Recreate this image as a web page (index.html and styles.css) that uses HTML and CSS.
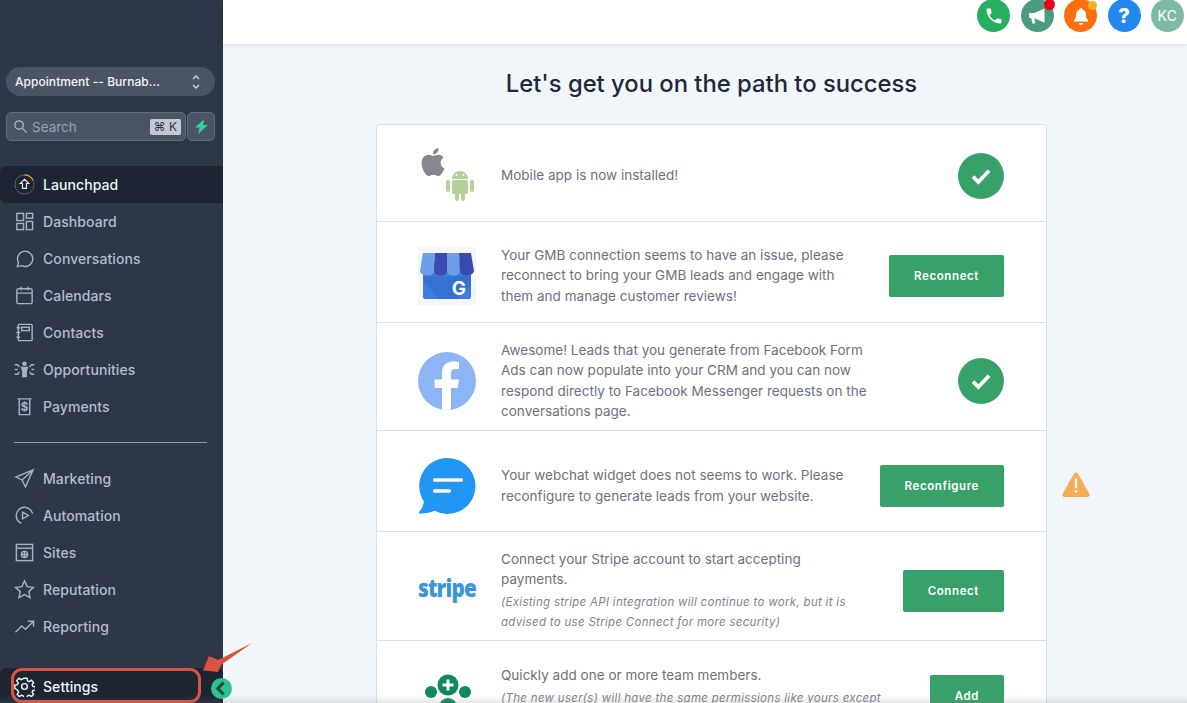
FILE: index.html
```html
<!DOCTYPE html>
<html lang="en">
<head>
    <meta charset="UTF-8">
    <title>Launchpad</title>
    <link rel="stylesheet" href="styles.css">
</head>
<body>
    <aside class="sidebar">
        <div class="location">
            <span class="location-name">Appointment -- Burnab...</span>
            <svg class="updown" viewBox="0 0 10 18"><path d="M2 6l3-3 3 3M2 12l3 3 3-3"/></svg>
        </div>
        <div class="search-row">
            <div class="search">
                <svg class="search-icon" viewBox="0 0 16 16"><circle cx="6.500" cy="6.500" r="4.500"/><path d="M10 10l4.500 4.500"/></svg>
                <span class="search-text">Search</span>
                <span class="kbd">⌘ K</span>
            </div>
            <div class="bolt"><svg viewBox="0 0 14 14"><path d="M9.500 0L1 8h4.200L4 14l9-8.500H8.500z"/></svg></div>
        </div>

        <nav class="nav">
            <a class="nav-item active">
                <svg class="nav-icon" viewBox="0 0 22 22"><circle cx="11" cy="11" r="10" stroke="#5f6777" stroke-width="1"/><path d="M11 1a10 10 0 0 1 9 5.600" stroke="#ed8936"/><path d="M11 5.500l4.500 4.500h-2.400v5H8.900v-5H6.500z" stroke="#e2e8f0" stroke-width="1.200"/></svg>
                Launchpad
            </a>
            <a class="nav-item">
                <svg class="nav-icon" viewBox="0 0 22 22"><rect x="3" y="2.500" width="7" height="7.500"/><rect x="13" y="2.500" width="6.500" height="5"/><rect x="3" y="13" width="7" height="6.500"/><rect x="13" y="11" width="6.500" height="8.500" /></svg>
                Dashboard
            </a>
            <a class="nav-item">
                <svg class="nav-icon" viewBox="0 0 22 22"><path d="M3.500 19.500l1.200-4.200A8 8 0 1 1 8 18.500z"/></svg>
                Conversations
            </a>
            <a class="nav-item">
                <svg class="nav-icon" viewBox="0 0 22 22"><rect x="3" y="4" width="16" height="15.500" rx="1.500"/><path d="M3 8.500h16M7.500 1.800V5.500M14.500 1.800V5.500"/></svg>
                Calendars
            </a>
            <a class="nav-item">
                <svg class="nav-icon" viewBox="0 0 22 22"><rect x="4.500" y="2.500" width="14.500" height="17" rx="1"/><rect x="8" y="5.500" width="8" height="3.500"/><path d="M2.500 6h4M2.500 11h4M2.500 16h4"/></svg>
                Contacts
            </a>
            <a class="nav-item">
                <svg class="nav-icon" viewBox="0 0 22 22"><circle cx="11" cy="5" r="2.400" class="solid"/><path d="M7 8.200h8l-1.500 5v5.800h-5v-5.800z" class="solid"/><path d="M.8 6h3l2 2.500M21.200 6h-3l-2 2.500M.8 16h3l2-2.500M21.200 16h-3l-2-2.500M.8 11h3M18.200 11h3"/></svg>
                Opportunities
            </a>
            <a class="nav-item">
                <svg class="nav-icon" viewBox="0 0 22 22"><path d="M3.500 3h15M5.500 3v16.500h11V3"/><text x="11" y="15.500" class="dollar">$</text></svg>
                Payments
            </a>
        </nav>

        <hr class="nav-divider">

        <nav class="nav">
            <a class="nav-item">
                <svg class="nav-icon" viewBox="0 0 22 22"><path d="M20 2L2 9.500l6.500 3 3.500 7.500zM20 2L8.500 12.500"/></svg>
                Marketing
            </a>
            <a class="nav-item">
                <svg class="nav-icon" viewBox="0 0 22 22"><path d="M19.500 9A8.700 8.700 0 1 0 8 19.300"/><path d="M9 7.500l6 3.500-6 3.500z"/></svg>
                Automation
            </a>
            <a class="nav-item">
                <svg class="nav-icon" viewBox="0 0 22 22"><rect x="2.500" y="2.500" width="17" height="17"/><path d="M2.500 6.500h17"/><circle cx="11" cy="13" r="3.200"/><path d="M7.800 13h6.400M11 9.800v6.400"/></svg>
                Sites
            </a>
            <a class="nav-item">
                <svg class="nav-icon" viewBox="0 0 22 22"><path d="M11 2l2.800 6 6.500.8-4.800 4.400 1.300 6.400L11 16.400l-5.800 3.200 1.300-6.400-4.800-4.400 6.500-.8z"/></svg>
                Reputation
            </a>
            <a class="nav-item">
                <svg class="nav-icon" viewBox="0 0 22 22"><path d="M1.500 17l6.500-6.500 4 3.500 8-8M14.500 5.500h6v5.500"/></svg>
                Reporting
            </a>
        </nav>

        <a class="nav-item settings">
            <svg class="nav-icon" viewBox="0 0 22 22"><circle cx="11" cy="11" r="3"/><path d="M9.300 2h3.400l.5 2.700 1.800.8 2.300-1.500 2.300 2.400-1.500 2.200.8 1.900 2.700.5v3.300l-2.700.5-.8 1.800 1.500 2.300-2.300 2.300-2.300-1.500-1.800.8-.5 2.600H9.300l-.5-2.600-1.800-.8-2.300 1.500-2.300-2.300 1.500-2.300-.8-1.800L0 12.400V9.100l2.700-.5.800-1.900L2 4.400 4.300 2l2.300 1.500 1.800-.8z" transform="translate(.9 .4)"/></svg>
            Settings
        </a>
        <span class="settings-outline"></span>
        <span class="collapse"><svg viewBox="0 0 20 20"><path d="M12 4.500L6.500 10l5.500 5.500"/></svg></span>
    </aside>

    <svg class="arrow" viewBox="0 0 51 32"><path d="M50 1L16 18l-9-4L1 28.500 16 30l3-7z"/></svg>

    <div class="main">
        <header class="topbar">
            <span class="top-btn phone">
                <svg viewBox="0 0 24 24"><path d="M6.600 10.800c1.400 2.800 3.800 5.100 6.600 6.600l2.200-2.200c.3-.3.700-.4 1-.2 1.100.4 2.300.6 3.600.6.600 0 1 .4 1 1V20c0 .6-.4 1-1 1C10.600 21 3 13.400 3 4c0-.6.400-1 1-1h3.500c.6 0 1 .4 1 1 0 1.300.2 2.500.6 3.600.1.300 0 .7-.2 1z"/></svg>
            </span>
            <span class="top-btn megaphone">
                <svg viewBox="0 0 24 24"><path d="M21 3L9 8.500H2.500v6H5L6.500 21h3.500l-1.200-6.200L21 20zM22.500 9.500v4"/></svg>
                <i class="dot dot-red"></i>
            </span>
            <span class="top-btn bell">
                <svg viewBox="0 0 24 24"><path d="M12 2.500a2 2 0 0 1 2 2c3 1 4 3.500 4 6.500 0 3 1 4.500 2.500 6v1.500h-17V17C5 15.500 6 14 6 11c0-3 1-5.500 4-6.500a2 2 0 0 1 2-2zM9.500 20.500h5a2.500 2.500 0 0 1-5 0z"/></svg>
                <i class="dot dot-amber"></i>
            </span>
            <span class="top-btn help">?</span>
            <span class="top-btn avatar">KC</span>
        </header>

        <section class="content">
            <h1 class="title">Let's get you on the path to success</h1>
            <div class="card">
                <div class="row row-mobile">
                    <div class="logo mobile-logo">
                        <svg class="apple" viewBox="0 0 24 24"><path d="M12.152 6.896c-.948 0-2.415-1.078-3.960-1.040-2.040.027-3.910 1.183-4.961 3.014-2.117 3.675-.546 9.103 1.519 12.090 1.013 1.454 2.208 3.090 3.792 3.039 1.520-.065 2.090-.987 3.935-.987 1.831 0 2.350.987 3.960.948 1.637-.026 2.676-1.480 3.676-2.948 1.156-1.688 1.636-3.325 1.662-3.415-.039-.013-3.182-1.221-3.220-4.857-.026-3.040 2.480-4.494 2.597-4.559-1.429-2.090-3.623-2.324-4.390-2.376-2-.156-3.675 1.090-4.610 1.090zM15.530 3.830c.843-1.012 1.400-2.427 1.245-3.830-1.207.052-2.662.805-3.532 1.818-.780.896-1.454 2.338-1.273 3.714 1.338.104 2.715-.688 3.559-1.701"/></svg>
                        <svg class="android" viewBox="0 0 30 32"><path d="M7 10a8 8 0 0 1 16 0z"/><rect x="7" y="11" width="16" height="14" rx="1.500"/><rect x="1" y="11" width="4" height="12" rx="2"/><rect x="25" y="11" width="4" height="12" rx="2"/><rect x="10" y="23" width="4" height="9" rx="2"/><rect x="16" y="23" width="4" height="9" rx="2"/><circle cx="11.500" cy="6" r="1" fill="#fff"/><circle cx="18.500" cy="6" r="1" fill="#fff"/></svg>
                    </div>
                    <p class="row-text">Mobile app is now installed!</p>
                    <span class="done"><svg viewBox="0 0 24 24"><path d="M6 12.500l4 4 8-8.500"/></svg></span>
                </div>

                <div class="row row-gmb">
                    <div class="logo">
                        <svg viewBox="0 0 58 58">
                            <rect width="58" height="58" fill="#f5f6f6"/>
                            <rect x="5" y="14" width="48" height="38" rx="2" fill="#3b7de0"/>
                            <path d="M5 29h48v10L38 52H22L5 34z" fill="#2f68c4" opacity=".55"/>
                            <path d="M5 6h12l-1 18c0 6-13 6-14 0z" fill="#6c9fe8"/>
                            <path d="M17 6h12v18c0 6-13 6-13 0z" fill="#3c4ab0"/>
                            <path d="M29 6h12l1 18c0 6-13 6-13 0z" fill="#6c9fe8"/>
                            <path d="M41 6h12l3 18c-1 6-14 6-14 0z" fill="#3c4ab0"/>
                            <text x="41" y="48" class="gmb-g">G</text>
                        </svg>
                    </div>
                    <p class="row-text">Your GMB connection seems to have an issue, please reconnect to bring your GMB leads and engage with them and manage customer reviews!</p>
                    <button class="action">Reconnect</button>
                </div>

                <div class="row row-fb">
                    <div class="logo">
                        <svg viewBox="0 0 58 58"><circle cx="29" cy="29" r="29" fill="#8db4f5"/><path d="M24 57.500V36h-7.500v-8.500H24V21c0-7.500 4.500-11.500 11-11.500 3 0 6 .5 6 .5v7h-3.500c-3.500 0-4.500 2.200-4.500 4.500v6h8l-1.300 8.500H33v21.500a29 29 0 0 1-9 0z" fill="#fff"/></svg>
                    </div>
                    <p class="row-text">Awesome! Leads that you generate from Facebook Form Ads can now populate into your CRM and you can now respond directly to Facebook Messenger requests on the conversations page.</p>
                    <span class="done"><svg viewBox="0 0 24 24"><path d="M6 12.500l4 4 8-8.500"/></svg></span>
                </div>

                <div class="row row-chat">
                    <div class="logo">
                        <svg viewBox="0 0 58 58"><path d="M29.500 1a28 28 0 1 1-13 52.800C12 56 6 56.800 2 56.500c-1 0-1.300-1-.8-1.700 2.500-2.800 4-6 4.700-10.300A28 28 0 0 1 29.500 1z" fill="#2196f3"/><path d="M16.500 23h27M16.500 34h15" stroke="#fff" stroke-width="3.400" stroke-linecap="round"/></svg>
                    </div>
                    <p class="row-text">Your webchat widget does not seems to work. Please reconfigure to generate leads from your website.</p>
                    <button class="action">Reconfigure</button>
                    <svg class="warning" viewBox="0 0 30 27"><path d="M15 1.500c1 0 1.700.5 2.200 1.400l11 19.500c.9 1.800 0 3.600-2 3.600H3.800c-2 0-2.900-1.800-2-3.600l11-19.500c.5-.9 1.200-1.400 2.200-1.400z" fill="#f6ad55"/><path d="M15 8.500v7.500" stroke="#fff" stroke-width="2.400" stroke-linecap="round"/><circle cx="15" cy="20.500" r="1.400" fill="#fff"/></svg>
                </div>

                <div class="row row-stripe">
                    <div class="logo stripe-logo">stripe</div>
                    <div class="row-text">
                        <p>Connect your Stripe account to start accepting payments.</p>
                        <p class="note">(Existing stripe API integration will continue to work, but it is advised to use Stripe Connect for more security)</p>
                    </div>
                    <button class="action">Connect</button>
                </div>

                <div class="row row-team">
                    <div class="logo team-logo">
                        <svg viewBox="0 0 58 58"><circle cx="30" cy="14" r="10.500" fill="#0f8a5f"/><path d="M30 8.500v11M24.500 14h11" stroke="#fff" stroke-width="3"/><circle cx="13" cy="21" r="6" fill="#0f8a5f"/><circle cx="47" cy="21" r="6" fill="#0f8a5f"/><circle cx="30" cy="36" r="9" fill="#0f8a5f"/></svg>
                    </div>
                    <div class="row-text">
                        <p>Quickly add one or more team members.</p>
                        <p class="note">(The new user(s) will have the same permissions like yours except</p>
                    </div>
                    <button class="action">Add</button>
                </div>
            </div>
        </section>
    </div>
    <div class="bottom-fade"></div>
</body>
</html>
```

FILE: styles.css
```css
* {
    box-sizing: border-box;
}
html, body {
    height: 100%;
}
body {
    margin: 0;
    display: flex;
    overflow: hidden;
    font-family: Inter, "Liberation Sans", sans-serif;
    background-color: #f1f6fa;
    color: #6b7280;
}
p {
    margin: 0;
}

/* sidebar */
.sidebar {
    position: relative;
    flex: 0 0 223px;
    height: 100%;
    padding-top: 67px;
    background-color: #2d3748;
    display: flex;
    flex-direction: column;
}
.location {
    height: 29px;
    margin: 0 8px 0 6px;
    padding: 0 14px 0 9px;
    border-radius: 15px;
    background-color: #4a5464;
    color: #f2f4f7;
    font-size: 12px;
    font-weight: 500;
    letter-spacing: 0.05px;
    display: flex;
    align-items: center;
    justify-content: space-between;
}
.updown {
    width: 10px;
    height: 18px;
    fill: none;
    stroke: #cbd5e0;
    stroke-width: 1.4;
}
.search-row {
    display: flex;
    height: 29px;
    margin: 16px 8px 0 6px;
    gap: 1px;
}
.search {
    flex: 1;
    display: flex;
    align-items: center;
    padding: 0 4px 0 6px;
    border: 1px solid #626b7a;
    border-radius: 5px;
    background-color: #4a5464;
}
.search-icon {
    width: 15px;
    height: 15px;
    fill: none;
    stroke: #a9b2bf;
    stroke-width: 1.5;
}
.search-text {
    flex: 1;
    margin-left: 4px;
    color: #98a2b1;
    font-size: 13.500px;
}
.kbd {
    padding: 1px 4px;
    border-radius: 2px;
    background-color: #c3c9d2;
    color: #2d3748;
    font-size: 12px;
    line-height: 14px;
}
.bolt {
    width: 28px;
    border: 1px solid #626b7a;
    border-radius: 5px;
    background-color: #4a5464;
    display: flex;
    align-items: center;
    justify-content: center;
}
.bolt svg {
    width: 15px;
    height: 15px;
    fill: #34d399;
}
.nav {
    display: flex;
    flex-direction: column;
}
.search-row + .nav {
    margin-top: 25px;
}
.nav-item {
    height: 37px;
    padding-left: 14px;
    display: flex;
    align-items: center;
    gap: 8px;
    color: #b3bdcb;
    font-size: 14px;
    font-weight: 500;
    letter-spacing: 0.08px;
}
.nav-item.active {
    background-color: #1d2432;
    border-radius: 6px 0 0 6px;
    color: #f0f3f7;
}
.nav-icon {
    flex: 0 0 21px;
    width: 21px;
    height: 21px;
    fill: none;
    stroke: #a7b1c0;
    stroke-width: 1.500;
}
.nav-icon .solid {
    fill: #a7b1c0;
    stroke: none;
}
.nav-icon .dollar {
    fill: #a7b1c0;
    stroke: none;
    font-size: 12px;
    font-weight: 700;
    text-anchor: middle;
}
.nav-divider {
    width: 193px;
    margin: 17px 0 17px 14px;
    border: 0;
    border-top: 1px solid #929cab;
}
.settings {
    position: absolute;
    left: 0;
    right: 0;
    bottom: 0;
    height: 35px;
    padding-top: 2px;
    background-color: #1d2432;
    border-radius: 6px 6px 0 0;
    color: #f0f3f7;
}
.settings .nav-icon {
    stroke: #f0f3f7;
}
.settings-outline {
    position: absolute;
    left: 11px;
    bottom: 0;
    width: 190px;
    height: 35px;
    border: 3.500px solid #dc5440;
    border-radius: 11px;
}
.collapse {
    position: absolute;
    left: 211px;
    bottom: 4px;
    width: 21px;
    height: 21px;
    border-radius: 50%;
    background-color: #2cc48d;
}
.collapse svg {
    display: block;
    fill: none;
    stroke: #1f4a45;
    stroke-width: 3;
}
.arrow {
    position: absolute;
    left: 202px;
    top: 642px;
    width: 51px;
    height: 32px;
    fill: #dc5440;
    z-index: 3;
}

/* top bar */
.main {
    flex: 1;
    min-width: 0;
    display: flex;
    flex-direction: column;
}
.topbar {
    flex: 0 0 44px;
    padding-right: 3px;
    background-color: #fff;
    box-shadow: 0 1px 4px rgba(0, 0, 0, 0.12);
    display: flex;
    justify-content: flex-end;
    gap: 10.500px;
    z-index: 1;
}
.top-btn {
    position: relative;
    width: 33px;
    height: 33px;
    margin-top: -1px;
    border-radius: 50%;
    color: #fff;
    display: flex;
    align-items: center;
    justify-content: center;
}
.top-btn svg {
    width: 20px;
    height: 20px;
    fill: #fff;
}
.phone {
    background-color: #27ae60;
}
.megaphone {
    background-color: #4a9b80;
}
.bell {
    background-color: #fb6f0f;
}
.help {
    background-color: #2088f0;
    font-size: 20px;
    font-weight: 800;
}
.avatar {
    background-color: #7cbaa3;
    font-size: 14px;
    letter-spacing: 0.3px;
}
.dot {
    position: absolute;
    top: 0;
    right: -1px;
    width: 11px;
    height: 11px;
    border-radius: 50%;
}
.dot-red {
    background-color: #e8001c;
}
.dot-amber {
    width: 9px;
    height: 9px;
    top: 2px;
    right: 0;
    background-color: #f9b020;
}

/* main list */
.content {
    flex: 1;
    min-height: 0;
    padding-left: 13px;
    display: flex;
    flex-direction: column;
    align-items: center;
}
.title {
    margin: 24px 0 25px;
    color: #1f2937;
    font-size: 23.800px;
    line-height: 31px;
    font-weight: 500;
}
.card {
    flex: none;
    width: 671px;
    background-color: #fff;
    border: 1px solid #d9dfe6;
    border-radius: 4px 4px 0 0;
}
.row {
    position: relative;
    padding: 7px 42px 0 41px;
    border-bottom: 1px solid #d9dfe6;
    display: flex;
    align-items: center;
}
.row-mobile { height: 97px; padding-top: 5px; }
.row-gmb { height: 101px; }
.row-fb { height: 108px; padding-top: 8px; }
.row-chat { height: 101px; padding-top: 9px; }
.row-stripe { height: 109px; padding-top: 9px; }
.row-team { height: 110px; border-bottom: 0; align-items: flex-start; padding-top: 24px; }
.logo {
    flex: 0 0 58px;
    width: 58px;
    margin-right: 25px;
}
.logo svg {
    display: block;
}
.row-text {
    flex: 1;
    max-width: 367px;
    margin-right: auto;
    font-size: 13.500px;
    line-height: 20.500px;
    letter-spacing: 0.02px;
    color: #6b7280;
}
.row-team .row-text {
    max-width: 390px;
}
.note {
    margin-top: 2px;
    font-size: 11.500px;
    font-style: italic;
    letter-spacing: 0.3px;
    line-height: 20.500px;
    color: #7c8592;
}
.action {
    flex: none;
    height: 42px;
    padding: 0 25px;
    border: 0;
    border-radius: 2px;
    background-color: #38a169;
    color: #fff;
    font-family: inherit;
    font-size: 11.500px;
    font-weight: 600;
    letter-spacing: 0.6px;
}
.row-team .action {
    margin-top: 10px;
}
.done {
    flex: none;
    width: 46px;
    height: 46px;
    border-radius: 50%;
    background-color: #38a169;
    display: flex;
    align-items: center;
    justify-content: center;
}
.done svg {
    width: 32px;
    height: 32px;
    fill: none;
    stroke: #fff;
    stroke-width: 2.800;
}
.mobile-logo {
    position: relative;
    height: 56px;
}
.apple {
    position: absolute;
    left: 1px;
    top: -2px;
    width: 28px;
    height: 32px;
    fill: #85888e;
}
.android {
    position: absolute;
    left: 27px;
    top: 21px;
    width: 30px;
    height: 32px;
    fill: #b5d19a;
}
.gmb-g {
    fill: #fff;
    font-size: 19px;
    font-weight: 700;
    text-anchor: middle;
}
.stripe-logo {
    margin-bottom: 7px;
    color: #3a96d8;
    font-family: "Open Sans", sans-serif;
    font-size: 25px;
    font-weight: 800;
    letter-spacing: -1px;
    white-space: nowrap;
    transform: scaleX(0.83);
    transform-origin: left;
}
.team-logo {
    margin-top: 6px;
}
.warning {
    position: absolute;
    right: -45px;
    top: 40px;
    width: 30px;
    height: 27px;
}
.bottom-fade {
    position: absolute;
    left: 0;
    right: 0;
    bottom: 0;
    height: 8px;
    background: linear-gradient(rgba(120, 125, 130, 0), rgba(120, 125, 130, 0.18));
    pointer-events: none;
}
```
